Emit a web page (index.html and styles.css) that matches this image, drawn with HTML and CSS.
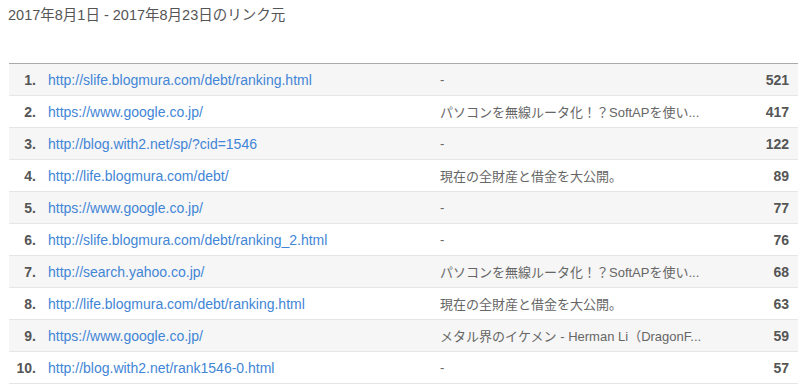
FILE: index.html
```html
<!DOCTYPE html>
<html lang="ja">
<head>
  <meta charset="UTF-8">
  <title>リンク元</title>
  <link rel="stylesheet" href="styles.css">
</head>
<body>
  <div class="report">
    <h1 class="report-title">2017年8月1日 - 2017年8月23日のリンク元</h1>

    <table class="ref-table">
      <tr>
        <td class="rank">1.</td>
        <td class="url"><a href="#">http://slife.blogmura.com/debt/ranking.html</a></td>
        <td class="page">-</td>
        <td class="count">521</td>
      </tr>
      <tr>
        <td class="rank">2.</td>
        <td class="url"><a href="#">https://www.google.co.jp/</a></td>
        <td class="page">パソコンを無線ルータ化！？SoftAPを使い...</td>
        <td class="count">417</td>
      </tr>
      <tr>
        <td class="rank">3.</td>
        <td class="url"><a href="#">http://blog.with2.net/sp/?cid=1546</a></td>
        <td class="page">-</td>
        <td class="count">122</td>
      </tr>
      <tr>
        <td class="rank">4.</td>
        <td class="url"><a href="#">http://life.blogmura.com/debt/</a></td>
        <td class="page">現在の全財産と借金を大公開。</td>
        <td class="count">89</td>
      </tr>
      <tr>
        <td class="rank">5.</td>
        <td class="url"><a href="#">https://www.google.co.jp/</a></td>
        <td class="page">-</td>
        <td class="count">77</td>
      </tr>
      <tr>
        <td class="rank">6.</td>
        <td class="url"><a href="#">http://slife.blogmura.com/debt/ranking_2.html</a></td>
        <td class="page">-</td>
        <td class="count">76</td>
      </tr>
      <tr>
        <td class="rank">7.</td>
        <td class="url"><a href="#">http://search.yahoo.co.jp/</a></td>
        <td class="page">パソコンを無線ルータ化！？SoftAPを使い...</td>
        <td class="count">68</td>
      </tr>
      <tr>
        <td class="rank">8.</td>
        <td class="url"><a href="#">http://life.blogmura.com/debt/ranking.html</a></td>
        <td class="page">現在の全財産と借金を大公開。</td>
        <td class="count">63</td>
      </tr>
      <tr>
        <td class="rank">9.</td>
        <td class="url"><a href="#">https://www.google.co.jp/</a></td>
        <td class="page">メタル界のイケメン - Herman Li（DragonF...</td>
        <td class="count">59</td>
      </tr>
      <tr>
        <td class="rank">10.</td>
        <td class="url"><a href="#">http://blog.with2.net/rank1546-0.html</a></td>
        <td class="page">-</td>
        <td class="count">57</td>
      </tr>
    </table>
  </div>
</body>
</html>
```

FILE: styles.css
```css
* {
  margin: 0;
  padding: 0;
  box-sizing: border-box;
}

body {
  font-family: "Liberation Sans", Arial, "Noto Sans CJK JP", sans-serif;
  background: #fff;
  color: #555;
  overflow: hidden;
}

.report {
  padding: 6px 8px 0 8px;
}

.report-title {
  font-size: 14.5px;
  font-weight: 400;
  line-height: 18px;
  color: #555;
  margin-bottom: 39px;
}

/* Table */
.ref-table {
  width: 789px;
  margin-left: 1px;
  border-collapse: collapse;
  border-top: 1px solid #aaa;
  font-size: 14px;
}

.ref-table tr {
  height: 32px;
  border-bottom: 1px solid #e6e6e6;
}

.ref-table tr:nth-child(odd) {
  background: #f6f6f6;
}

.ref-table td {
  vertical-align: middle;
  white-space: nowrap;
}

.rank {
  width: 27px;
  text-align: right;
  font-weight: 700;
  color: #555;
}

.url {
  width: 404px;
  padding-left: 12px;
}

.url a {
  color: #4285d6;
  text-decoration: none;
}

.page {
  font-size: 13px;
  color: #666;
}

.count {
  width: 60px;
  text-align: right;
  padding-right: 9px;
  font-weight: 700;
  color: #555;
}
```
